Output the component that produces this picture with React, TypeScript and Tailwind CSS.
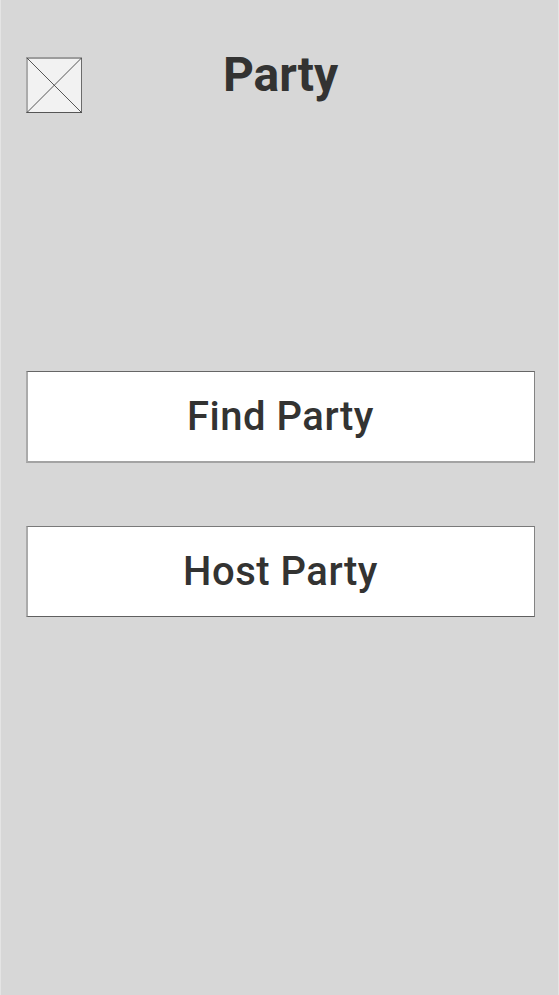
export default function App() {
  const button =
    "flex w-full items-start justify-center border-l-2 border-r border-t border-l-[#ababab] border-r-[#838383] bg-white pr-px pt-[25px] text-[40px] font-medium leading-none tracking-[0.5px]";
  return (
    <main className="flex h-[995px] w-full flex-col border-x border-[#e4e4e4] bg-[#d7d7d7] pl-[25px] pr-[23px] font-['Roboto',sans-serif] text-[#333332]">
      <header className="grid h-[371px] grid-cols-[56px_1fr_56px] items-start pt-[57px]">
        <svg className="size-14" viewBox="0 0 56 56" fill="none" aria-hidden="true">
          <path d="M1 1h54.5v54.5H1z" fill="#f2f2f2" />
          <path d="M1 .5V56" stroke="#ababab" strokeWidth="2" />
          <path d="M0 1h56" stroke="#9c9c9c" strokeWidth="2" />
          <path d="M55.5 1v55" stroke="#6b6b6b" />
          <path d="M.5 55.5H56" stroke="#555555" />
          <path d="M1 1l54.5 54.5M55.5 1L1 55.5" stroke="#444444" strokeWidth="0.9" />
        </svg>
        <h1 className="-mt-[6px] text-center text-[48px] font-bold leading-none tracking-[-0.1px]">Party</h1>
      </header>
      <div className="flex flex-col gap-[63px]">
        <button className={`${button} h-[92px] border-b-2 border-b-[#a3a3a3] border-t-[#666666]`}>
          Find Party
        </button>
        <button className={`${button} h-[91px] border-b border-b-[#606060] border-t-[#797979]`}>
          Host Party
        </button>
      </div>
    </main>
  );
}
